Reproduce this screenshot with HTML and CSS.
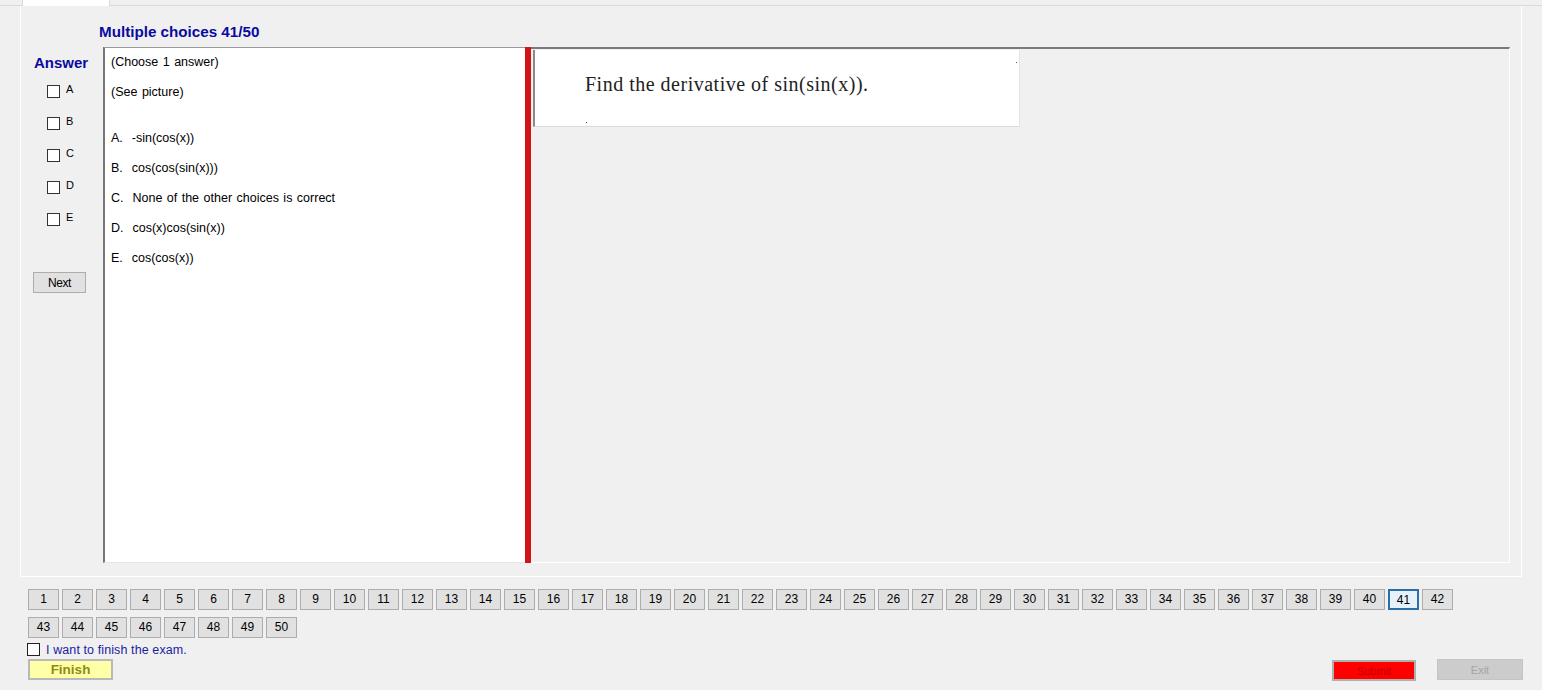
FILE: index.html
```html
<!DOCTYPE html>
<html>
<head>
<meta charset="utf-8">
<link rel="stylesheet" href="styles.css">
</head>
<body>
<div class="tabstrip"><div class="tab"></div></div>
<div class="page">
  <div class="title">Multiple choices 41/50</div>
  <div class="main">
    <div class="answers">
      <div class="answer-label">Answer</div>
      <div class="cb-row cb-first"><span class="box"></span><span class="letter">A</span></div>
      <div class="cb-row"><span class="box"></span><span class="letter">B</span></div>
      <div class="cb-row"><span class="box"></span><span class="letter">C</span></div>
      <div class="cb-row"><span class="box"></span><span class="letter">D</span></div>
      <div class="cb-row"><span class="box"></span><span class="letter">E</span></div>
      <button class="btn next">Next</button>
    </div>
    <div class="textbox">
      <div class="line first">(Choose 1 answer)</div>
      <div class="line">(See picture)</div>
      <div class="spacer"></div>
      <div class="line">A.&nbsp; -sin(cos(x))</div>
      <div class="line">B.&nbsp; cos(cos(sin(x)))</div>
      <div class="line">C.&nbsp; None of the other choices is correct</div>
      <div class="line">D.&nbsp; cos(x)cos(sin(x))</div>
      <div class="line">E.&nbsp; cos(cos(x))</div>
    </div>
    <div class="redbar"></div>
    <div class="viewer">
      <div class="picture">
        <div class="question">Find the derivative of sin(sin(x)).</div>
        <span class="dot dot-a"></span>
        <span class="dot dot-b"></span>
      </div>
    </div>
  </div>
</div>
<div class="numbers">
  <button class="btn num">1</button><button class="btn num">2</button><button class="btn num">3</button><button class="btn num">4</button><button class="btn num">5</button><button class="btn num">6</button><button class="btn num">7</button><button class="btn num">8</button><button class="btn num">9</button><button class="btn num">10</button>
  <button class="btn num">11</button><button class="btn num">12</button><button class="btn num">13</button><button class="btn num">14</button><button class="btn num">15</button><button class="btn num">16</button><button class="btn num">17</button><button class="btn num">18</button><button class="btn num">19</button><button class="btn num">20</button>
  <button class="btn num">21</button><button class="btn num">22</button><button class="btn num">23</button><button class="btn num">24</button><button class="btn num">25</button><button class="btn num">26</button><button class="btn num">27</button><button class="btn num">28</button><button class="btn num">29</button><button class="btn num">30</button>
  <button class="btn num">31</button><button class="btn num">32</button><button class="btn num">33</button><button class="btn num">34</button><button class="btn num">35</button><button class="btn num">36</button><button class="btn num">37</button><button class="btn num">38</button><button class="btn num">39</button><button class="btn num">40</button>
  <button class="btn num current">41</button><button class="btn num">42</button><button class="btn num">43</button><button class="btn num">44</button><button class="btn num">45</button><button class="btn num">46</button><button class="btn num">47</button><button class="btn num">48</button><button class="btn num">49</button><button class="btn num">50</button>
</div>
<div class="confirm"><span class="box big"></span><span class="confirm-text">I want to finish the exam.</span></div>
<div class="actions">
  <button class="finish">Finish</button>
  <div class="right-actions">
    <button class="submit">Submit</button>
    <button class="exit">Exit</button>
  </div>
</div>
</body>
</html>
```
FILE: styles.css
```css
* { box-sizing: border-box; }
html, body { margin: 0; padding: 0; }
body {
  width: 1542px;
  height: 690px;
  overflow: hidden;
  background: #f0f0f0;
  font-family: "Liberation Sans", Arial, sans-serif;
  color: #000;
}
button { font-family: "Liberation Sans", Arial, sans-serif; padding: 0; cursor: default; }

.tabstrip {
  height: 6px;
  border-bottom: 1px solid #dadada;
}
.tab {
  margin-left: 22px;
  width: 88px;
  height: 6px;
  background: #fff;
  border-left: 1px solid #dadada;
  border-right: 1px solid #dadada;
}

.page {
  margin-left: 20px;
  width: 1502px;
  height: 571px;
  border: 1px solid #fff;
  border-top: none;
  background: #f0f0f0;
}
.title {
  padding: 17px 0 0 78px;
  height: 41px;
  font-size: 15.2px;
  line-height: 18px;
  font-weight: bold;
  color: #0a0aa0;
}
.main {
  display: flex;
  height: 516px;
}
.answers {
  width: 82px;
  padding-top: 7px;
  display: flex;
  flex-direction: column;
}
.answer-label {
  margin-left: 13px;
  font-size: 15px;
  line-height: 18px;
  font-weight: bold;
  color: #0a0aa0;
}
.cb-row {
  height: 32px;
  display: flex;
  align-items: center;
  padding-left: 26px;
}
.cb-first { margin-top: 3px; }
.box {
  width: 13px;
  height: 13px;
  border: 1px solid #333;
  background: #fff;
  display: inline-block;
}
.letter {
  margin-left: 6px;
  font-size: 11px;
  margin-top: -5px;
}
.btn {
  background: #e1e1e1;
  border: 1px solid #adadad;
  font-size: 12px;
  color: #000;
}
.next {
  margin: 37px 0 0 12px;
  width: 53px;
  height: 21px;
  letter-spacing: -0.4px;
}

.textbox {
  width: 422px;
  height: 516px;
  background: #fff;
  border-left: 2px solid #777;
  border-top: 1px solid #9a9a9a;
  border-bottom: 1px solid #e6e6e6;
  padding-left: 6px;
  font-size: 12.5px;
  word-spacing: 1px;
}
.line {
  line-height: 30px;
  height: 30px;
}
.line.first { margin-top: -1px; }
.spacer { height: 16px; }

.redbar {
  width: 6px;
  height: 516px;
  background: #d21414;
}
.viewer {
  width: 979px;
  height: 516px;
  border-top: 2px solid #7a7a7a;
  border-right: 1px solid #fff;
  border-bottom: 1px solid #fff;
  padding: 1px 0 0 2px;
}
.picture {
  position: relative;
  width: 487px;
  height: 77px;
  background: #fff;
  border-left: 2px solid #8a8a8a;
  border-bottom: 1px solid #dcdcdc;
  border-right: 1px solid #e6e6e6;
  padding: 22px 0 0 50px;
}
.question {
  font-family: "Liberation Serif", "Times New Roman", serif;
  font-size: 20px;
  line-height: 24px;
  color: #222;
  letter-spacing: 0.5px;
}
.dot {
  position: absolute;
  width: 1px;
  height: 1px;
  background: #555;
}
.dot-a { left: 51px; top: 72px; }
.dot-b { right: 2px; top: 12px; }

.numbers {
  margin: 12px 0 0 28px;
  width: 1430px;
  display: flex;
  flex-wrap: wrap;
  gap: 7px 3px;
}
.num {
  width: 31px;
  height: 21px;
  line-height: 19px;
}
.num.current {
  border: 2px solid #2c6ea6;
  background: #e5f1fb;
}

.confirm {
  margin: 3px 0 0 27px;
  height: 17px;
  display: flex;
  align-items: center;
}
.box.big { width: 13px; height: 13px; border-color: #222; }
.confirm-text {
  margin-left: 6px;
  font-size: 12.5px;
  color: #1c1ca0;
  letter-spacing: 0.1px;
}
.actions {
  margin-top: 1px;
  display: flex;
  justify-content: space-between;
  padding: 0 19px 0 28px;
}
.finish {
  width: 85px;
  height: 21px;
  background: #ffffa8;
  border: 2px solid #b9b9b9;
  color: #8c8c14;
  font-weight: bold;
  font-size: 13.5px;
}
.right-actions {
  display: flex;
  gap: 21px;
  align-items: flex-start;
}
.submit {
  margin-top: 1px;
  width: 84px;
  height: 21px;
  background: #ff0000;
  border: 2px solid #b0b0b0;
  color: #c00000;
  font-size: 11px;
}
.exit {
  width: 86px;
  height: 21px;
  background: #cccccc;
  border: 1px solid #c4c4c4;
  color: #a4a4a4;
  font-size: 11px;
}
```
